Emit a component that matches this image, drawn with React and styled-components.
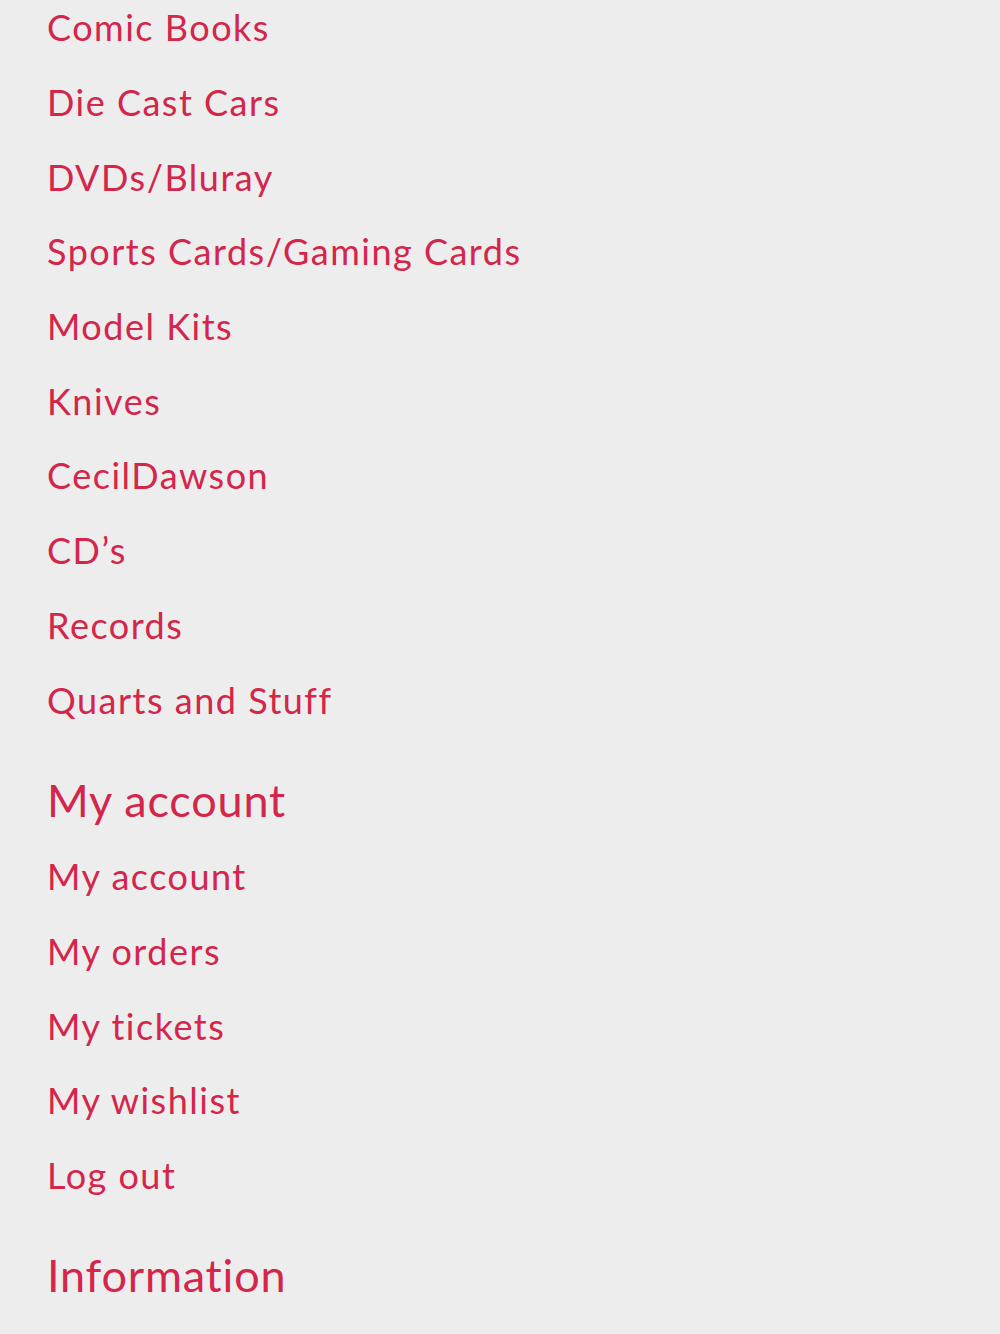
import React from "react";
import styled, { createGlobalStyle } from "styled-components";

const GlobalStyle = createGlobalStyle`
  html, body {
    margin: 0;
    padding: 0;
    background: #ededed;
  }
  body {
    font-family: Lato, "Noto Sans", sans-serif;
  }
`;

const Footer = styled.nav`
  padding: 0 47px;
  margin-top: -10px;
  min-height: 1334px;
`;

const Section = styled.section`
  display: flex;
  flex-direction: column;
`;

const Heading = styled.h3`
  margin: 24px 0 0;
  font-size: 45px;
  font-weight: 400;
  line-height: 78px;
  letter-spacing: 0.8px;
  color: #d4254a;
`;

const LinkList = styled.ul`
  list-style: none;
  margin: 0;
  padding: 0;
`;

const Item = styled.li`
  height: 74.7px;
  display: flex;
  align-items: center;
`;

const NavLink = styled.a`
  font-size: 36px;
  color: #d4254a;
  text-decoration: none;
  letter-spacing: 1.5px;
`;

const categories = [
  "Comic Books",
  "Die Cast Cars",
  "DVDs/Bluray",
  "Sports Cards/Gaming Cards",
  "Model Kits",
  "Knives",
  "CecilDawson",
  "CD’s",
  "Records",
  "Quarts and Stuff",
];

const account = ["My account", "My orders", "My tickets", "My wishlist", "Log out"];

function Links({ items }) {
  return (
    <LinkList>
      {items.map((label) => (
        <Item key={label}>
          <NavLink href="#">{label}</NavLink>
        </Item>
      ))}
    </LinkList>
  );
}

export default function App() {
  return (
    <>
      <GlobalStyle />
      <Footer>
        <Section>
          <Links items={categories} />
        </Section>
        <Section>
          <Heading>My account</Heading>
          <Links items={account} />
        </Section>
        <Section>
          <Heading>Information</Heading>
        </Section>
      </Footer>
    </>
  );
}
